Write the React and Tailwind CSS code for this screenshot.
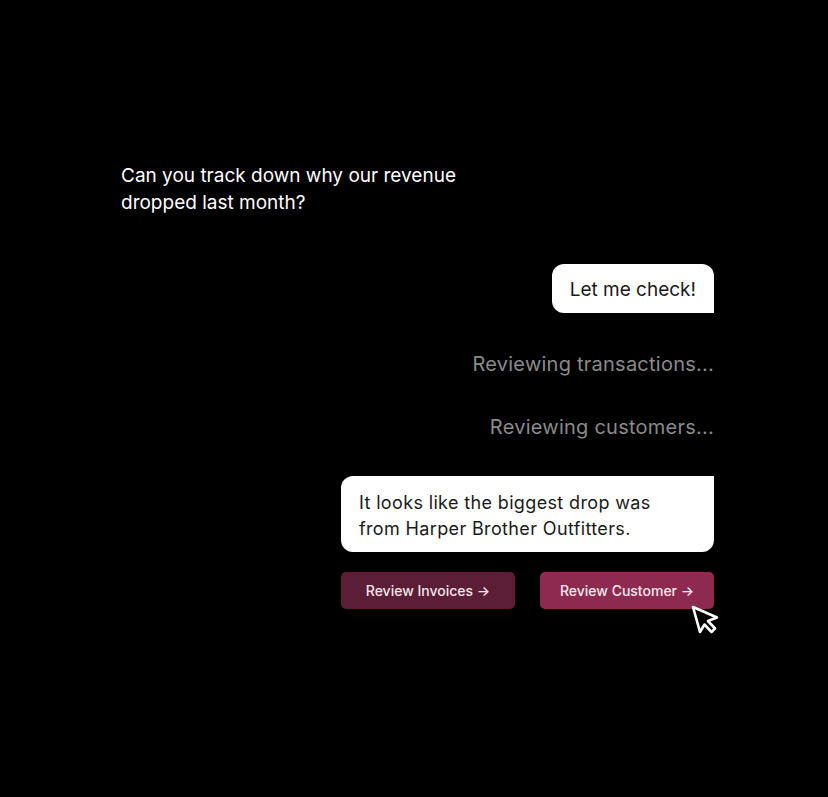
import React from "react";

const font = { fontFamily: "Inter, 'Noto Sans', sans-serif" };

function Cursor() {
  return (
    <svg
      width="30"
      height="32"
      viewBox="0 0 30 32"
      className="absolute right-[-6px] bottom-[-27px]"
    >
      <path
        d="M3 3 L10 28 L14.5 20.5 L21.5 28 L25 24.5 L18 17 L27 13.5 Z"
        fill="#000"
        stroke="#fff"
        strokeWidth="2.6"
        strokeLinejoin="round"
      />
    </svg>
  );
}

export default function App() {
  return (
    <main
      className="w-full h-[797px] bg-black pt-[162px] pl-[121px] pr-[114px] flex flex-col"
      style={font}
    >
      <p className="text-white text-[19px] leading-[27px] max-w-[340px]">
        Can you track down why our revenue dropped last month?
      </p>

      <div className="flex flex-col items-end">
        <div className="mt-[48px] bg-white text-[#1a1a1a] text-[19px] leading-[27px] pt-[12px] pb-[10px] px-[18px] rounded-[12px] rounded-br-none">
          Let me check!
        </div>

        <p className="mt-[37px] text-[#8a8a8a] text-[20px] leading-[28px] tracking-[0.012em]">
          Reviewing transactions...
        </p>
        <p className="mt-[35px] text-[#8a8a8a] text-[20px] leading-[28px] tracking-[0.012em]">
          Reviewing customers...
        </p>

        <div className="mt-[35px] w-[373px] bg-white text-[#1a1a1a] text-[18px] leading-[26px] pt-[14px] pb-[10px] pl-[18px] pr-[50px] tracking-[0.02em] rounded-[12px] rounded-tr-none">
          It looks like the biggest drop was from Harper Brother Outfitters.
        </div>

        <div className="mt-[20px] w-[373px] flex gap-[25px]">
          <button className="flex-1 h-[37px] rounded-[5px] bg-[#5c1d36] text-[#f3e6ea] text-[14px] font-medium">
            Review Invoices →
          </button>
          <div className="relative flex-1">
            <button className="w-full h-[37px] rounded-[5px] bg-[#8e2a4f] text-[#f6e9ee] text-[14px] font-medium">
              Review Customer →
            </button>
            <Cursor />
          </div>
        </div>
      </div>
    </main>
  );
}
